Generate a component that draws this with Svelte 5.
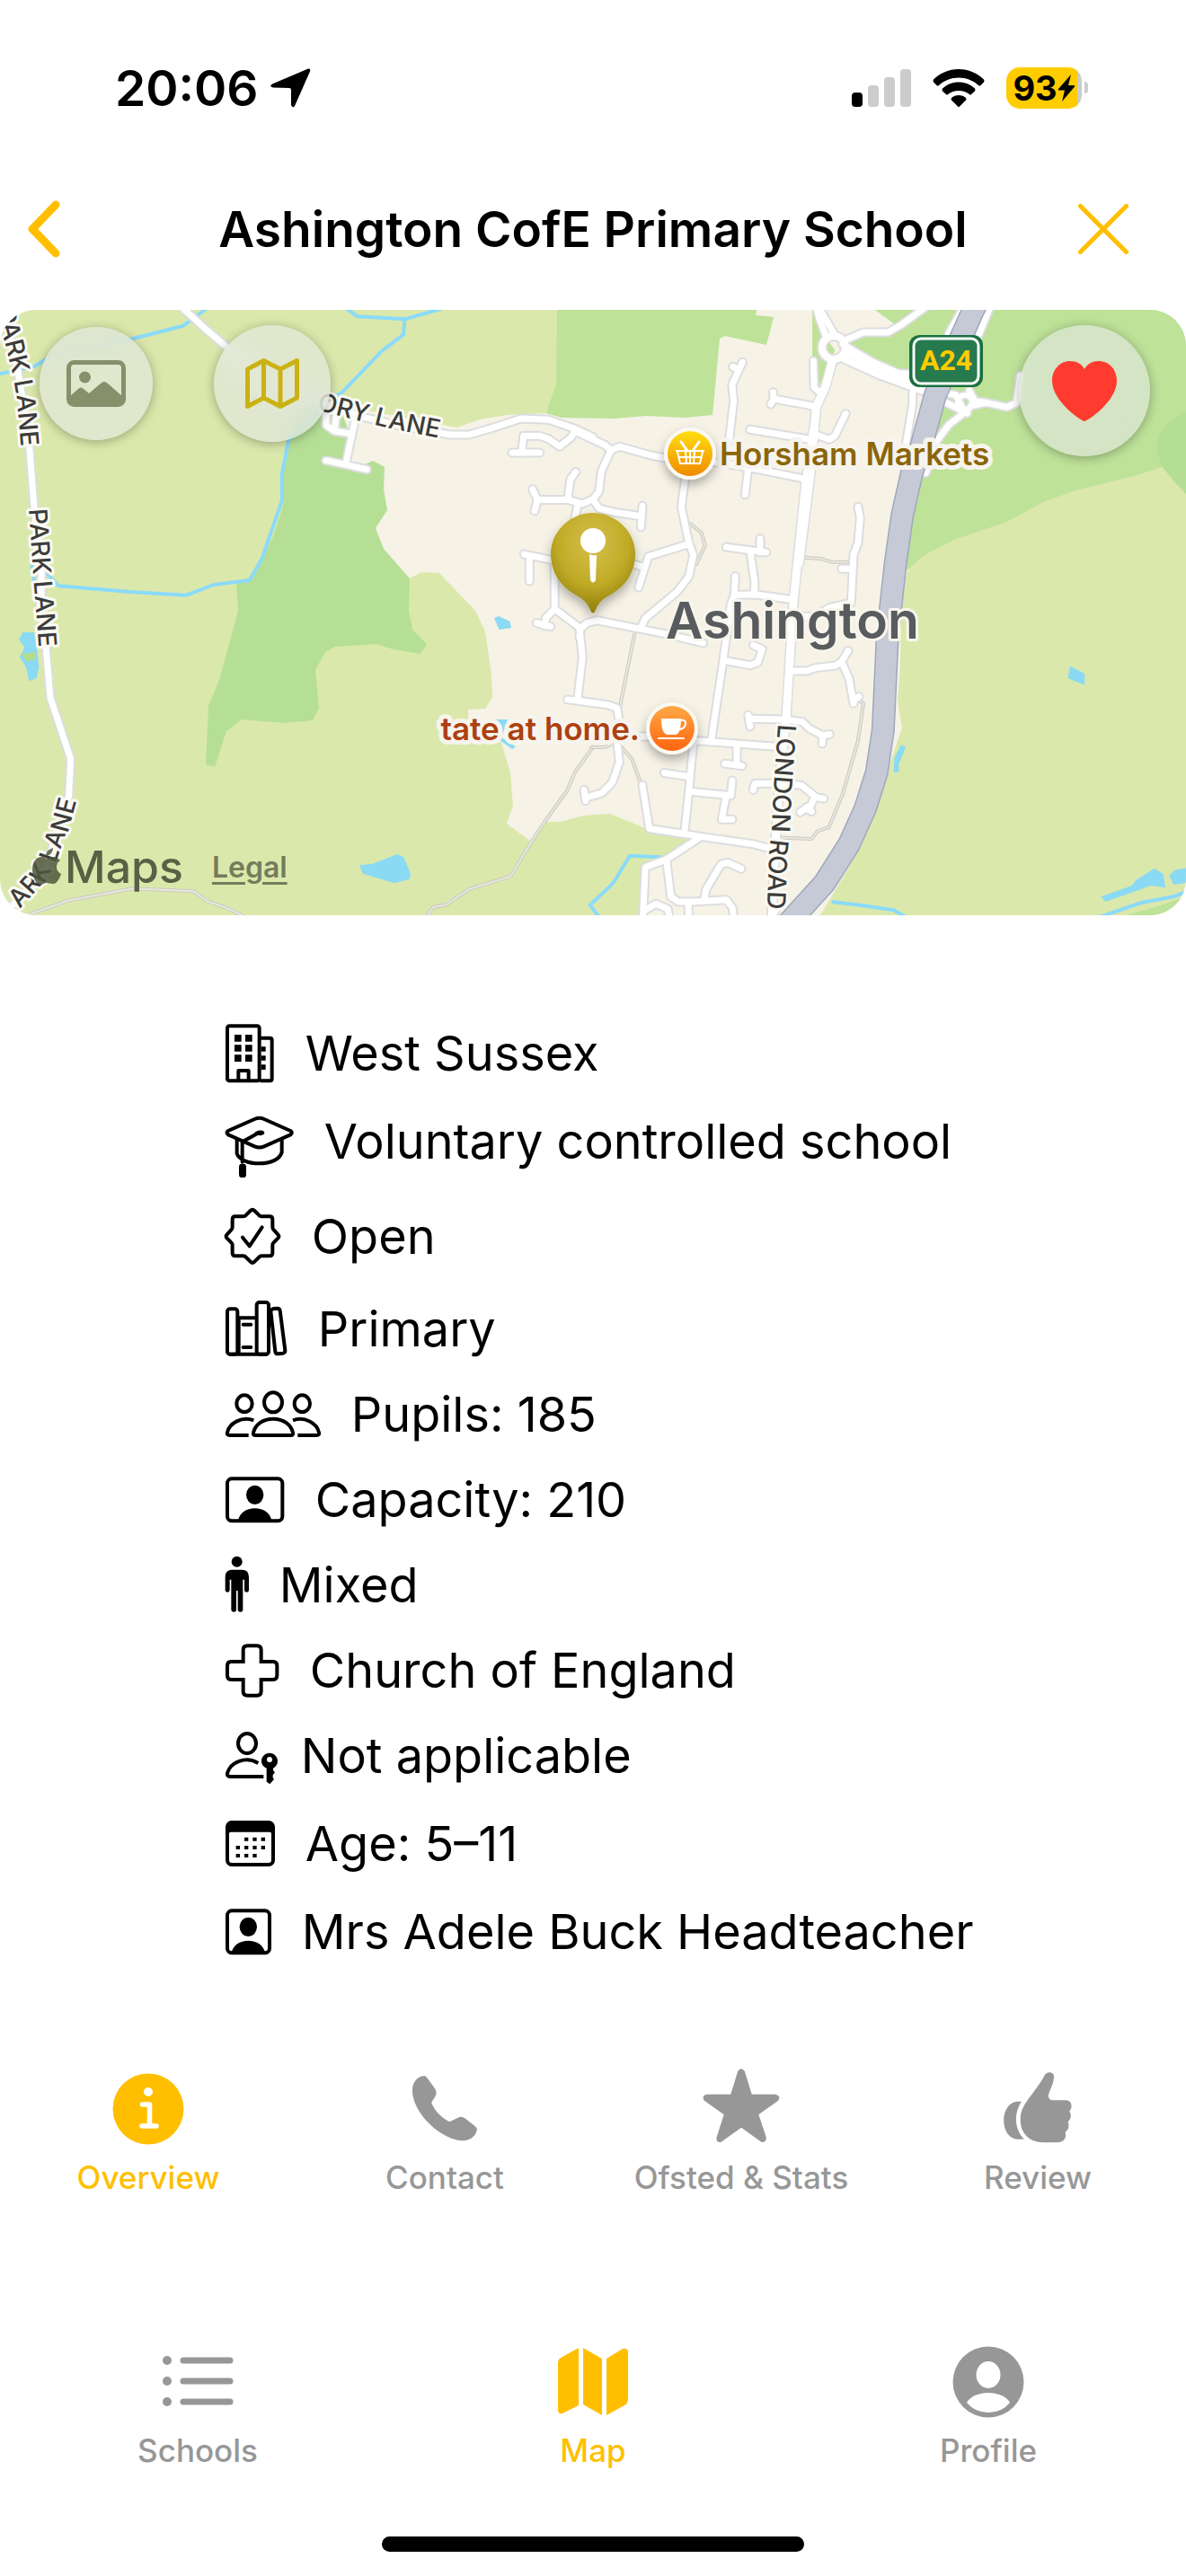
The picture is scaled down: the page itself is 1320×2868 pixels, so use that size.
<script>
  // Origin and scale of each survey sheet; geometry below is listed in sheet units.
  const sheets = {
    nw: [0, 340, 0.42092, 0.33333],
    ne: [660, 340, 0.42092, 0.33333],
    sw: [0, 680, 0.42092, 0.33333],
    se: [660, 680, 0.42092, 0.33333],
    c: [480, 480, 0.33333, 0.34436]
  };

  const place = ([sheet, points]) => {
    const [ox, oy, sx, sy] = sheets[sheet];
    return points
      .split(' ')
      .map((pair) => {
        const [x, y] = pair.split(',').map(Number);
        return `${(ox + x * sx).toFixed(1)},${(oy + y * sy).toFixed(1)}`;
      })
      .join(' ');
  };

  const roads = [
    ['nw', '-10,-10 15,40 45,200 75,430 90,670 110,900 105,1020'],
    ['sw', '110,-100 108,0 122,130 133,290 187,495 182,620 150,740 125,850 100,900 20,1000'],
    ['nw', '480,5 540,75 600,140 720,290 880,335 950,370 1050,400 1190,432 1240,432 1300,410 1378,378 1450,382 1520,412 1568,440'],
    ['c', '480,0 580,45 600,62 628,50 740,80 800,90'],
    ['nw', '862,330 862,400 885,420 925,428'],
    ['nw', '890,360 885,415'],
    ['nw', '940,375 915,525'],
    ['nw', '862,518 970,548'],
    ['c', '270,70 362,70'],
    ['c', '302,70 308,15 360,15 392,25 428,50 465,22 480,0'],
    ['c', '600,62 568,130 560,195 540,220 505,235 455,222 355,222'],
    ['c', '338,188 355,222 345,258'],
    ['c', '455,222 465,155 482,132'],
    ['c', '540,220 560,250 610,262 700,275'],
    ['c', '705,242 700,310'],
    ['c', '490,235 478,290'],
    ['c', '310,398 420,420'],
    ['c', '328,402 328,485'],
    ['c', '412,420 412,575 382,605 380,630'],
    ['c', '352,620 398,632'],
    ['c', '412,575 495,635'],
    ['c', '495,665 498,640 520,620 555,612 700,640 780,655 908,685'],
    ['c', '495,640 505,730 488,870'],
    ['c', '455,868 490,872 590,885 620,895 628,940 620,1000 628,1070 605,1135 570,1170 515,1185'],
    ['c', '510,1160 515,1195'],
    ['c', '700,635 715,605 820,520 860,470 875,400 860,360 835,245 848,150'],
    ['c', '860,365 725,405 692,505'],
    ['c', '660,425 710,440'],
    ['c', '620,985 730,988 880,1000 1150,1020'],
    ['c', '985,375 1118,392'],
    ['c', '1098,348 1098,392'],
    ['c', '1065,390 1080,490 1078,530'],
    ['c', '1015,470 1012,530 1080,528 1210,545'],
    ['c', '1012,530 1000,560 975,740 935,998'],
    ['c', '980,742 1065,757 1090,748 1105,705 1075,692'],
    ['c', '1210,775 1255,775 1285,765 1350,758 1370,745 1392,710'],
    ['c', '1370,745 1395,800 1410,880'],
    ['c', '1410,870 1428,858'],
    ['c', '1425,245 1432,280 1425,360 1410,400 1402,555 1330,570 1280,600 1220,598'],
    ['c', '1370,445 1402,445'],
    ['c', '1060,930 1180,932 1240,940 1260,960 1308,985'],
    ['c', '1058,918 1065,955'],
    ['c', '1330,980 1308,985 1305,1010'],
    ['c', '1020,1015 1020,1080'],
    ['c', '980,1075 1038,1082'],
    ['c', '778,1105 860,1117'],
    ['c', '875,1005 860,1165 845,1300'],
    ['c', '865,1165 1000,1178'],
    ['c', '1005,1130 1000,1178 985,1178 970,1255 1005,1255'],
    ['c', '1075,1160 1080,1140 1150,1138 1235,1145 1280,1180'],
    ['c', '1310,1188 1280,1183 1260,1225'],
    ['c', '1232,1232 1255,1215 1270,1230'],
    ['c', '705,1145 728,1285 895,1310 1075,1335 1140,1352'],
    ['c', '895,1315 785,1385 715,1410 705,1600'],
    ['c', '785,1385 800,1505 825,1522 870,1522 985,1515 1005,1540 1015,1600'],
    ['c', '912,1510 918,1480 968,1400 990,1395 1035,1415'],
    ['c', '858,1525 860,1600'],
    ['c', '712,1550 750,1528 790,1545 800,1600'],
    ['c', '940,100 1060,118 1250,155'],
    ['c', '1058,120 1048,205'],
    ['c', '1150,1550 1110,1600'],
    ['ne', '360,450 372,320 368,265 395,190'],
    ['ne', '370,205 385,215'],
    ['ne', '470,330 478,312 590,338'],
    ['ne', '476,290 478,315'],
    ['ne', '415,415 585,450'],
    ['ne', '585,430 625,448 640,435 668,362'],
    ['ne', '583,185 585,275 600,290'],
    ['ne', '845,290 845,330 828,460'],
    ['ne', '590,5 600,50 615,100'],
    ['ne', '596,5 640,100'],
    ['ne', '670,115 715,90 780,90 815,65 880,5'],
    ['ne', '660,130 740,190 850,250'],
    ['ne', '655,175 760,235 880,290'],
    ['ne', '670,160 800,235 880,265'],
    ['ne', '780,225 860,230'],
    ['ne', '1050,5 1020,100'],
    ['ne', '980,5 940,95'],
    ['ne', '1000,335 1040,325 1095,340 1120,325 1130,235'],
    ['ne', '995,285 1010,320 1040,325'],
    ['ne', '990,350 940,400 905,460 880,560'],
    ['ne', '925,290 960,300 980,350'],
    ['ne', '925,320 990,360']
  ].map(place);

  const mainRoads = [
    ['ne', '632,190 615,270 590,340 575,560 545,860'],
    ['c', '1275,0 1250,170 1210,545 1195,770 1185,930 1165,1100 1150,1320 1145,1400 1138,1560']
  ].map(place);

  const trunk = [
    place(['ne', '1016,-10 1005,17 905,300 868,470 843,560 818,700 800,860 786,1020']),
    place(['se', '778,100 767,400 750,540 720,660 677,780 612,910 535,1017 515,1045'])
  ].join(' ');

  const tracks = [
    ['sw', '80,1013 180,968 350,928 512,937 545,968 600,993 640,1017'],
    ['sw', '1130,1017 1145,990 1180,982 1240,930 1350,887 1405,772 1440,705 1500,600 1520,540 1568,455'],
    ['c', '535,1022 580,1022 620,1005 670,1060 700,1140'],
    ['c', '680,650 630,890'],
    ['c', '865,300 902,328 914,370 885,430'],
    ['c', '1240,408 1300,412 1335,423 1395,423'],
    ['c', '1425,870 1443,880 1425,1000 1375,1170 1328,1280 1290,1293 1270,1318 1170,1315']
  ].map(place);

  const streams = [
    ['nw', '0,228 90,205 140,165 350,112 485,68 545,12'],
    ['nw', '915,10 945,37 1070,46 1165,12'],
    ['nw', '1070,46 1067,97 1010,152 905,290 865,320 763,450 746,560 746,650 693,845 660,918 565,933 493,968 345,957 155,937 120,890'],
    ['nw', '84,870 92,930'],
    ['c', '765,1377 663,1373 607,1462 530,1532 575,1590'],
    ['se', '635,973 715,985 795,1000 830,1025'],
    ['se', '1335,1025 1450,975 1535,955 1575,935']
  ].map(place);

  const ponds = [
    ['sw', '60,72 90,72 95,100 103,190 97,225 77,235 68,185 52,155 65,122 50,95'],
    ['sw', '1307,25 1318,18 1348,35 1352,57 1320,63'],
    ['sw', '950,850 985,845 1050,813 1067,822 1086,880 1082,897 1043,910 960,878'],
    ['se', '1262,185 1300,210 1300,248 1255,225'],
    ['se', '815,447 827,455 808,515 810,538 795,540 797,490'],
    ['se', '1343,955 1425,918 1435,900 1485,860 1508,880 1514,925 1475,918 1355,972'],
    ['se', '1523,885 1540,865 1575,858 1575,908 1535,915'],
    ['c', '215,932 255,932 235,990 282,1020 270,1028 230,1000']
  ].map(place);

  const greens = [
    ['ne', '580,10 580,180 598,270 640,150 605,90 590,10'],
    ['ne', '740,10 800,65 720,95 670,120 760,200 880,230 960,10'],
    ['ne', '940,10 1575,10 1575,630 1540,590 1505,540 1430,570 1270,620 1195,655 1090,725 960,780 875,835 820,895 830,620 880,400'],
    ['se', '1385,1025 1500,985 1575,950 1575,1025']
  ].map(place);

  const facts = [
    { icon: 'building', box: '60 50 165 216', w: 55, h: 72, text: 'West Sussex' },
    { icon: 'cap', box: '60 335 228 234', w: 76, h: 78, text: 'Voluntary controlled school' },
    { icon: 'seal', box: '60 643 186 264', w: 62, h: 88, text: 'Open' },
    { icon: 'books', box: '60 962 207 216', w: 69, h: 72, text: 'Primary' },
    { icon: 'people', box: '60 109 318 216', w: 106, h: 72, text: 'Pupils: 185' },
    { icon: 'frame', box: '60 394 198 216', w: 66, h: 72, text: 'Capacity: 210' },
    { icon: 'figure', box: '60 685 78 216', w: 26, h: 72, text: 'Mixed' },
    { icon: 'cross', box: '60 970 180 216', w: 60, h: 72, text: 'Church of England' },
    { icon: 'key', box: '60 177 150 216', w: 50, h: 72, text: 'Not applicable' },
    { icon: 'calendar', box: '60 471 165 234', w: 55, h: 78, text: 'Age: 5–11' },
    { icon: 'portrait', box: '60 765 153 216', w: 51, h: 72, text: 'Mrs Adele Buck Headteacher' }
  ];

  let section = $state('Overview');
  let page = $state('Map');
  let liked = $state(true);
</script>

<div class="screen">
  <div class="status">
    <div class="clock">
      <span class="time">20:06</span>
      <svg width="46" height="46" viewBox="0 0 46 46" aria-hidden="true">
        <path d="M43 1.500Q46 1 45 4.500L28 43Q26 46 24 42V25Q24 23 22 23L4 22.500Q-1 21 3 18.500Z" fill="#000" />
      </svg>
    </div>
    <div class="signals">
      <svg width="66" height="44" viewBox="0 0 66 44" aria-hidden="true">
        <rect x="0" y="27" width="12" height="16" rx="4" fill="#000" />
        <rect x="18" y="19" width="12" height="24" rx="4" fill="#ccc" />
        <rect x="36" y="10" width="12" height="33" rx="4" fill="#ccc" />
        <rect x="54" y="1" width="12" height="42" rx="4" fill="#ccc" />
      </svg>
      <svg width="58" height="44" viewBox="0 0 58 44" aria-hidden="true">
        <path d="M29 1C40 1 50 5.500 57 12.500Q58 14 57 15.500L53.500 19Q52.500 20 51 19C45 13.500 37.500 10.500 29 10.500S13 13.500 7 19Q5.500 20 4.500 19L1 15.500Q0 14 1 12.500C8 5.500 18 1 29 1Z" />
        <path d="M29 15.500C36 15.500 42 18 47 22.500Q48 24 47 25.500L43 29Q42 30 41 29C37.500 26.500 33.500 25 29 25S20.500 26.500 17 29Q16 30 15 29L11 25.500Q10 24 11 22.500C16 18 22 15.500 29 15.500Z" />
        <path d="M29 30C32 30 35 31 37 33Q38 34.500 37 35.500L30 42.500Q29 43.500 28 42.500L21 35.500Q20 34.500 21 33C23 31 26 30 29 30Z" />
      </svg>
      <div class="battery">
        <span>93</span>
        <svg width="20" height="30" viewBox="0 0 20 30" aria-hidden="true"><path d="M15 0L1 16Q0 17.500 2 17.500H8L5 30L19 13.500Q20 12 18 12H12Z" /></svg>
      </div>
    </div>
  </div>

  <header>
    <button class="plain" aria-label="Back">
      <svg width="38" height="66" viewBox="0 0 38 66"><path d="M32 6L6 33L32 60" fill="none" stroke="#ffbf00" stroke-width="9" stroke-linecap="round" stroke-linejoin="round" /></svg>
    </button>
    <h1>Ashington CofE Primary School</h1>
    <button class="plain close" aria-label="Close">
      <svg width="58" height="58" viewBox="0 0 58 58"><path d="M3.500 3.500L54.500 54.500M54.500 3.500L3.500 54.500" fill="none" stroke="#ffbf00" stroke-width="5" stroke-linecap="round" /></svg>
    </button>
  </header>

  <section class="map" aria-label="School location">
    <svg class="canvas" viewBox="0 345 1320 674">
      <defs>
        <linearGradient id="market" x1="0" y1="0" x2="0" y2="1"><stop offset="0" stop-color="#ffdf10" /><stop offset="1" stop-color="#f08a00" /></linearGradient>
        <linearGradient id="cafe" x1="0" y1="0" x2="0" y2="1"><stop offset="0" stop-color="#ffa845" /><stop offset="1" stop-color="#ff6510" /></linearGradient>
        <radialGradient id="pin" cx="0.5" cy="0.3" r="0.7"><stop offset="0" stop-color="#d5c04b" /><stop offset="0.6" stop-color="#c0ab27" /><stop offset="1" stop-color="#8d7b0c" /></radialGradient>
        <filter id="shade" x="-50%" y="-50%" width="200%" height="200%"><feDropShadow dx="0" dy="6" stdDeviation="6" flood-color="#000" flood-opacity="0.3" /></filter>
        <path id="park1" d="M-4 346L5 380L14 416L19 445L26 530" />
        <path id="park2" d="M32 567L36 623L38 653L41 690L46 760" />
        <path id="park3" d="M22 1012L53 977L64 955L71 935L78 918L84 896L90 850" />
        <path id="rectory" d="M352 456L378 463L430 476L520 494" />
        <path id="london" d="M866 806L861 877L859 923L856 950L853 1030" />
      </defs>

      <rect y="345" width="1320" height="674" fill="#dbe8ab" />
      <path fill="#b5df95" d="M368 440L340 455L321 490L314 527L315 563L304 597L292 622L278 646L263 650L265 680L244 757L232 786L229 851L239 854L252 814L269 801L316 805L348 802L355 789L351 746L362 726L373 720L419 717L438 723L468 728L475 717L459 701L455 680L456 644L470 600L430 500Z" />
      <path fill="#f6f2e6" d="M375 443L398 455L509 476L534 467L564 462L608 460L700 440L800 345H1060L1040 560L1009 638L1003 680L1002 740L999 780L1004 810L994 840L986 862L974 903L950 957L913 1019H715L719 965L740 957L772 932L723 924L679 906L650 908L623 915L606 915L591 937L564 917L571 897L568 860L558 827L521 810V790L540 789L548 777L547 752L540 703L529 680L489 638L469 637L456 644L427 611L418 588L431 568L427 545L428 520L415 513L406 517L386 514L389 483Z" />
      <path fill="#bde298" d="M620 345L619 428L608 460L625 465L683 466L719 463L761 465L793 462L801 377L807 374L853 384L861 353L841 351L842 345Z" />
      {#each greens as points}
        <polygon {points} fill="#bde298" />
      {/each}
      <path fill="#b3de94" d="M1320 458Q1288 475 1287 500L1294 520L1308 537L1320 550Z" />
      {#each ponds as points}
        <polygon {points} fill="#8adaf4" />
      {/each}
      <path fill="#b5dc8c" d="M24 728L40 726L40 734L29 736Z" />

      <g fill="none" stroke-linecap="round" stroke-linejoin="round">
        {#each streams as points}
          <polyline {points} stroke="#8adafa" stroke-width="4" />
        {/each}
        {#each tracks as points}
          <polyline {points} stroke="#c9cac2" stroke-width="4" />
          <polyline {points} stroke="#e8e7dc" stroke-width="2" />
        {/each}
        {#each roads as points}
          <polyline {points} stroke="#dcddde" stroke-width="11" />
        {/each}
        {#each mainRoads as points}
          <polyline {points} stroke="#dcddde" stroke-width="12" />
        {/each}
        <circle cx="928" cy="387" r="13" stroke="#dcddde" stroke-width="12" />
        <circle cx="1074" cy="448" r="8" stroke="#dcddde" stroke-width="10" />
        {#each roads as points}
          <polyline {points} stroke="#fff" stroke-width="7" />
        {/each}
        {#each mainRoads as points}
          <polyline {points} stroke="#fff" stroke-width="9" />
        {/each}
        <circle cx="928" cy="387" r="13" stroke="#fff" stroke-width="8" />
        <circle cx="1074" cy="448" r="8" stroke="#fff" stroke-width="6" />
        <polyline points={trunk} stroke="#9fa7bd" stroke-width="26" />
        <polyline points={trunk} stroke="#c6cad7" stroke-width="23" />
      </g>

      <g class="street">
        <text><textPath href="#park1">PARK LANE</textPath></text>
        <text><textPath href="#park2">PARK LANE</textPath></text>
        <text><textPath href="#park3">ARK LANE</textPath></text>
        <text><textPath href="#rectory">ORY LANE</textPath></text>
        <text><textPath href="#london">LONDON ROAD</textPath></text>
      </g>

      <g>
        <rect x="1012" y="373" width="82" height="58" rx="11" fill="#19703f" />
        <rect x="1017" y="377" width="72" height="50" rx="8" fill="#277a4d" stroke="#fff" stroke-width="3" />
        <text class="shield" x="1053" y="412" text-anchor="middle">A24</text>
      </g>

      <text class="town" x="882" y="711" text-anchor="middle">Ashington</text>
      <text class="poi market" x="801" y="518">Horsham Markets</text>
      <text class="poi cafe" x="712" y="824" text-anchor="end">tate at home.</text>

      <g>
        <circle cx="768" cy="505" r="29" fill="#fbf9f3" filter="url(#shade)" />
        <circle cx="768" cy="505" r="25" fill="url(#market)" />
        <g fill="none" stroke="#fff" stroke-width="2">
          <path d="M758 492L765 502M778 492L771 502" stroke-linecap="round" stroke-width="3" />
          <path d="M752 502H784M754 503L757 516H779L782 503M756 509H780M763 503L764 516M768 503V516M773 503L772 516" />
        </g>
      </g>
      <g>
        <circle cx="748" cy="811" r="29" fill="#fbf9f3" filter="url(#shade)" />
        <circle cx="748" cy="811" r="25" fill="url(#cafe)" />
        <path d="M736 800H758Q758 818 751 818H743Q736 817 736 800Z" fill="#fff" />
        <path d="M757 802Q764 801 763 806Q762 812 755 812M733 822H761" fill="none" stroke="#fff" stroke-width="2" stroke-linecap="round" />
      </g>

      <g filter="url(#shade)">
        <path fill="url(#pin)" d="M660 571C686 571 707 592 707 617C707 640 693 655 678 663C668 668 665 674 662 681Q660 684 658 681C655 674 651 668 642 663C627 655 613 640 613 617C613 592 634 571 660 571Z" />
      </g>
      <circle cx="660" cy="602" r="14" fill="#fff" />
      <path fill="#fff" d="M656 617Q660 619 664 618L663 646Q660 651 657 646Z" />
    </svg>

    <div class="controls">
      <button class="round photo" aria-label="Photos">
        <svg width="66" height="52" viewBox="0 0 66 52">
          <rect x="2.500" y="2.500" width="61" height="47" rx="6" fill="none" stroke="#87906b" stroke-width="5" />
          <circle cx="20.500" cy="19" r="6.500" fill="#87906b" />
          <path fill="#87906b" d="M3 41L13 32Q16 29 19 32L25 37L38 26Q42 22 46 26L63 41V47Q62 50 58 50H7Q3 50 3 46Z" />
        </svg>
      </button>
      <button class="round mapview" aria-label="Map view">
        <svg width="60" height="56" viewBox="0 0 60 56" fill="none" stroke="#cbb213" stroke-width="5" stroke-linejoin="round">
          <path d="M2.500 12L20.500 2.500L39 12L57.500 2.500V44L39 53.500L20.500 44L2.500 53.500ZM20.500 2.500V44M39 12V53.500" />
        </svg>
      </button>
      <button class="round heart" aria-label="Favourite" aria-pressed={liked} onclick={() => (liked = !liked)}>
        <svg width="74" height="68" viewBox="0 0 74 68"><path fill="#ff3b2f" d="M37 68C34 68 1 46 1 23C1 10 10 1 21 1C28 1 34 4 37 10C40 4 46 1 53 1C64 1 73 10 73 23C73 46 40 68 37 68Z" /></svg>
      </button>
    </div>

    <div class="credit">
      <svg width="32" height="42" viewBox="0 0 32 42" aria-hidden="true" fill="#4f563c" fill-opacity="0.85">
        <path d="M23 0C23 5 19 9 15 9C15 4 19 1 23 0Z" />
        <path d="M16 12C18 12 20 10 24 10C27 10 29 12 31 14C25 18 26 26 32 29C30 35 27 40 23 40C20 40 19 39 16 39S12 41 9 41C4 41 0 32 0 24C0 15 5 10 10 10C13 10 15 12 16 12Z" />
      </svg>
      <span class="brand">Maps</span>
      <a href="#legal">Legal</a>
    </div>
  </section>

  <ul class="facts">
    {#each facts as fact}
      <li>
        <svg width={fact.w} height={fact.h} viewBox={fact.box} fill="none" stroke="#000" stroke-width="12" stroke-linecap="round" stroke-linejoin="round" aria-hidden="true">
          {#if fact.icon === 'building'}
            <rect x="66" y="66" width="107" height="183" rx="7" />
            <path d="M179 106H208Q215 106 215 113V242Q215 249 208 249H179M103 249V215H137V249" />
            <path fill="#000" stroke="none" d="M90 95h23v23h-23zM126 95h23v23h-23zM90 129h23v22h-23zM126 129h23v22h-23zM90 162h23v23h-23zM126 162h23v23h-23zM179 135h15v16h-15zM179 165h15v16h-15zM179 195h15v17h-15z" />
          {:else if fact.icon === 'cap'}
            <path d="M69 416L157 377Q173 370 189 377L277 416Q286 422 277 429L189 468Q173 475 157 468L69 429Q60 422 69 416Z" />
            <path d="M98 445V492C105 512 135 525 173 525S240 512 248 488V445M116 520V453L165 426" />
            <path fill="#000" stroke="none" d="M157 424C157 416 190 408 190 423C190 434 166 434 157 424Z" />
            <rect x="105" y="526" width="24" height="46" rx="10" fill="#000" stroke="none" />
          {:else if fact.icon === 'seal'}
            <path d="M143 688Q150 681 157 688L171 702Q175 707 181 707H207Q217 707 217 717V743Q217 749 222 753L235 767Q241 773 235 780L222 793Q217 797 217 803V829Q217 839 207 839H181Q175 839 171 844L157 858Q150 865 143 858L129 844Q125 839 119 839H93Q83 839 83 829V803Q83 797 78 793L65 780Q59 773 65 767L78 753Q83 749 83 743V717Q83 707 93 707H119Q125 707 129 702Z" />
            <path d="M117 777L140 806L182 743" />
          {:else if fact.icon === 'books'}
            <rect x="66" y="1002" width="34" height="151" rx="9" />
            <path d="M104 1032H160M75 1153H197M104 1038V1150M119 1054H145M119 1130H145" />
            <rect x="164" y="980" width="40" height="173" rx="9" />
            <path d="M213 1006Q213 1003 222 1001L233 1000Q241 1000 242 1008L259 1140Q260 1148 252 1150L236 1152Q227 1153 226 1144L211 1010" />
          {:else if fact.icon === 'people'}
            <ellipse cx="123" cy="180" rx="26" ry="28" />
            <ellipse cx="316" cy="180" rx="26" ry="28" />
            <ellipse cx="219" cy="176" rx="30" ry="33" />
            <path d="M219 231C185 231 160 250 153 277Q151 286 160 286H278Q287 286 285 277C278 250 253 231 219 231Z" />
            <path stroke-linecap="butt" d="M154 236C115 222 72 245 66 277Q64 286 74 286H137M285 236C324 222 366 245 372 277Q374 286 364 286H301" />
          {:else if fact.icon === 'frame'}
            <rect x="66" y="431" width="184" height="141" rx="15" />
            <ellipse cx="158" cy="485" rx="29" ry="32" fill="#000" stroke="none" />
            <path fill="#000" stroke="none" d="M102 573C105 545 130 530 158 530S211 545 214 573Z" />
          {:else if fact.icon === 'figure'}
            <circle cx="98" cy="714" r="18" fill="#000" stroke="none" />
            <path fill="#000" stroke="none" d="M82 741H115Q138 741 138 766V808Q138 816 130 816T123 808V774H118V874Q118 882 110 882T101 874V811H96V874Q96 882 88 882T79 874V774H74V808Q74 816 66 816T59 808V766Q59 741 82 741Z" />
          {:else if fact.icon === 'cross'}
            <path stroke-linejoin="miter" d="M133 995H165Q179 995 179 1009V1048H219Q232 1048 232 1062V1094Q232 1108 219 1108H179V1147Q179 1161 165 1161H133Q119 1161 119 1147V1108H79Q66 1108 66 1094V1062Q66 1048 79 1048H119V1009Q119 995 133 995Z" />
          {:else if fact.icon === 'key'}
            <ellipse cx="132" cy="243" rx="30" ry="33" />
            <path stroke-linecap="butt" d="M169 309C127 284 76 306 66 343Q64 353 76 354H187" />
            <path fill="#000" fill-rule="evenodd" stroke="none" d="M207 275C222 275 234 287 234 302C234 313 228 321 219 326V333L225 340L218 349V357L222 363L208 379L197 371V326C186 321 180 313 180 302C180 287 192 275 207 275ZM207 288A9 9 0 1 0 207 306A9 9 0 1 0 207 288Z" />
          {:else if fact.icon === 'calendar'}
            <rect x="66" y="516" width="153" height="141" rx="15" />
            <path fill="#000" stroke="none" d="M62 530Q64 512 82 512H203Q222 512 223 530V552H213Q212 548 206 548H80Q73 548 72 552H62Z" />
            <path stroke-linecap="butt" stroke-dasharray="13 15" d="M123 572H192M95 600H192M95 627H165" />
          {:else}
            <rect x="66" y="802" width="141" height="141" rx="15" />
            <ellipse cx="136" cy="856" rx="29" ry="32" fill="#000" stroke="none" />
            <path fill="#000" stroke="none" d="M80 943C84 917 108 902 136 902S188 917 192 943Z" />
          {/if}
        </svg>
        <span>{fact.text}</span>
      </li>
    {/each}
  </ul>

  <nav class="tabs sections" aria-label="School sections">
    <button class:active={section === 'Overview'} onclick={() => (section = 'Overview')}>
      <svg width="84" height="84" viewBox="0 0 84 84" aria-hidden="true">
        <circle cx="42" cy="43" r="39.500" fill="currentColor" />
        <circle cx="42" cy="24" r="5" fill="#fff" />
        <path d="M35.500 38H43.500V62M35 62H51" fill="none" stroke="#fff" stroke-width="5.500" stroke-linecap="round" stroke-linejoin="round" />
      </svg>
      Overview
    </button>
    <button class:active={section === 'Contact'} onclick={() => (section = 'Contact')}>
      <svg width="84" height="84" viewBox="1076 105 200 252" preserveAspectRatio="none" aria-hidden="true">
        <path fill="currentColor" d="M1120 124Q1125 122 1130 131L1151 168Q1156 180 1151 192L1142 210Q1140 214 1143 220C1152 245 1170 265 1186 275Q1190 277 1194 274L1211 263Q1220 257 1229 265L1255 290Q1263 297 1261 306C1256 330 1240 340 1221 340C1165 335 1092 250 1090 174C1090 145 1103 126 1120 124Z" />
      </svg>
      Contact
    </button>
    <button class:active={section === 'Ofsted & Stats'} onclick={() => (section = 'Ofsted & Stats')}>
      <svg width="84" height="84" viewBox="293 105 200 252" preserveAspectRatio="none" aria-hidden="true">
        <path fill="currentColor" d="M384 108Q393 92 402 108L421 185H483Q500 189 491 206L439 253L459 328Q460 348 446 344L393 296L340 344Q325 349 328 328L347 253L295 206Q286 189 302 185H365Z" />
      </svg>
      Ofsted &amp; Stats
    </button>
    <button class:active={section === 'Review'} onclick={() => (section = 'Review')}>
      <svg width="84" height="84" viewBox="1074 105 200 252" preserveAspectRatio="none" aria-hidden="true">
        <path fill="currentColor" d="M1194 118Q1203 107 1213 115Q1219 121 1216 136C1214 156 1204 175 1202 190Q1203 203 1212 205H1249Q1261 206 1263 220Q1265 232 1258 241Q1267 262 1254 277Q1261 297 1247 312Q1252 345 1225 346H1188C1150 346 1128 312 1128 271C1128 215 1160 196 1194 118Z" />
        <path fill="currentColor" d="M1131 209C1110 250 1112 300 1138 335H1122C1098 335 1084 305 1084 272S1098 209 1122 209Z" />
      </svg>
      Review
    </button>
  </nav>

  <nav class="tabs pages" aria-label="Main">
    <button class:active={page === 'Schools'} onclick={() => (page = 'Schools')}>
      <svg width="84" height="84" viewBox="0 0 84 84" aria-hidden="true">
        <g fill="currentColor"><circle cx="8" cy="19" r="5" /><circle cx="8" cy="42" r="5" /><circle cx="8" cy="65" r="5" /></g>
        <path d="M26 19H78M26 42H78M26 65H78" stroke="currentColor" stroke-width="7" stroke-linecap="round" />
      </svg>
      Schools
    </button>
    <button class:active={page === 'Map'} onclick={() => (page = 'Map')}>
      <svg width="84" height="84" viewBox="0 0 84 84" aria-hidden="true" fill="currentColor">
        <path d="M26 5V69L8 78Q3 79 3 74V21Q3 18 6 16ZM31 5L52 17V80L31 68ZM57 17L75 6Q81 5 81 10V62Q81 67 77 69L57 80Z" />
      </svg>
      Map
    </button>
    <button class:active={page === 'Profile'} onclick={() => (page = 'Profile')}>
      <svg width="84" height="84" viewBox="0 0 84 84" aria-hidden="true">
        <circle cx="42" cy="43" r="39.500" fill="currentColor" />
        <ellipse cx="42" cy="35" rx="13.500" ry="15" fill="#fff" />
        <path fill="#fff" d="M42 55C54 55 63 60 66 66Q57 77 42 77T18 66C21 60 30 55 42 55Z" />
      </svg>
      Profile
    </button>
  </nav>

  <div class="home"></div>
</div>

<style>
  :global(body) {
    margin: 0;
    background: #fff;
  }
  .screen {
    display: flex;
    flex-direction: column;
    min-height: 100vh;
    font-family: Inter, 'Liberation Sans', sans-serif;
    color: #000;
  }
  button {
    margin: 0;
    padding: 0;
    border: 0;
    background: none;
    font: inherit;
    cursor: pointer;
  }
  svg {
    display: block;
    flex: none;
    overflow: visible;
  }
  .status {
    display: flex;
    justify-content: space-between;
    align-items: center;
    box-sizing: border-box;
    height: 165px;
    padding: 31px 116px 0 128px;
  }
  .clock,
  .signals {
    display: flex;
    align-items: center;
  }
  .clock {
    gap: 12px;
  }
  .signals {
    gap: 24px;
  }
  .time {
    font-size: 55px;
    font-weight: 600;
    line-height: 64px;
  }
  .battery {
    position: relative;
    display: flex;
    align-items: center;
    justify-content: center;
    box-sizing: border-box;
    width: 84px;
    height: 46px;
    border-radius: 15px;
    background: linear-gradient(90deg, #fc0 94%, #ccc 94%);
    font-size: 38px;
    font-weight: 700;
    line-height: 46px;
  }
  .battery::after {
    content: '';
    position: absolute;
    left: 87px;
    top: 16px;
    width: 4px;
    height: 13px;
    border-radius: 0 4px 4px 0;
    background: #ccc;
  }
  header {
    display: grid;
    grid-template-columns: 1fr auto 1fr;
    align-items: center;
    height: 180px;
  }
  .plain {
    justify-self: start;
    margin-left: 30px;
  }
  .close {
    justify-self: end;
    margin: 0 63px 0 0;
  }
  h1 {
    margin: 0;
    font-size: 55px;
    font-weight: 600;
    line-height: 68px;
  }
  .map {
    position: relative;
    overflow: hidden;
    border-radius: 40px;
  }
  .canvas {
    width: 100%;
    height: auto;
    overflow: hidden;
  }
  .street {
    font-size: 28px;
    font-weight: 500;
    fill: #3c3c3a;
    stroke: #fbfaf4;
    stroke-width: 6px;
    stroke-linejoin: round;
    paint-order: stroke;
  }
  .shield {
    font-family: Roboto, 'Liberation Sans', sans-serif;
    font-size: 32px;
    font-weight: 700;
    fill: #fc0;
  }
  .town {
    font-size: 57px;
    font-weight: 600;
    fill: #585c5e;
    stroke: #f8f5ec;
    stroke-width: 6px;
    stroke-linejoin: round;
    paint-order: stroke;
  }
  .poi {
    font-size: 35px;
    font-weight: 600;
    stroke: #f7f4ed;
    stroke-width: 10px;
    stroke-linejoin: round;
    paint-order: stroke;
  }
  .market {
    fill: #8b6508;
  }
  .cafe {
    fill: #ad4010;
  }
  .controls {
    position: absolute;
    top: 17px;
    left: 44px;
    right: 40px;
    display: flex;
    align-items: flex-start;
  }
  .round {
    display: grid;
    place-items: center;
    width: 130px;
    height: 130px;
    border-radius: 50%;
    background: rgba(226, 230, 226, 0.6);
    backdrop-filter: blur(16px);
    box-shadow: 0 2px 12px rgba(0, 0, 0, 0.3);
  }
  .photo {
    width: 126px;
    height: 126px;
    margin: 2px 68px 0 0;
  }
  .heart {
    width: 146px;
    height: 146px;
    margin-left: auto;
  }
  .credit {
    position: absolute;
    left: 36px;
    bottom: 24px;
    display: flex;
    align-items: center;
    color: #5a6045;
  }
  .brand {
    margin-left: 4px;
    font-size: 50px;
    font-weight: 500;
    line-height: 60px;
  }
  .credit a {
    margin-left: 32px;
    font-size: 32px;
    font-weight: 600;
    color: #747c5b;
    text-underline-offset: 5px;
  }
  .facts {
    display: flex;
    flex-direction: column;
    gap: 23px;
    margin: 118px 0 0 19%;
    padding: 0;
    list-style: none;
    font-size: 54px;
    line-height: 72px;
  }
  .facts li {
    display: flex;
    align-items: center;
    gap: 34px;
  }
  .tabs {
    display: flex;
    font-size: 35px;
    font-weight: 500;
    line-height: 40px;
    color: #979797;
  }
  .tabs button {
    flex: 1 1 0;
    display: flex;
    flex-direction: column;
    align-items: center;
    gap: 15px;
    color: inherit;
  }
  .tabs .active {
    color: #ffbf00;
  }
  .sections {
    margin-top: 118px;
  }
  .pages {
    margin-top: 165px;
  }
  .home {
    align-self: center;
    width: 470px;
    height: 17px;
    margin: auto 0 27px;
    border-radius: 9px;
    background: #000;
  }
</style>
